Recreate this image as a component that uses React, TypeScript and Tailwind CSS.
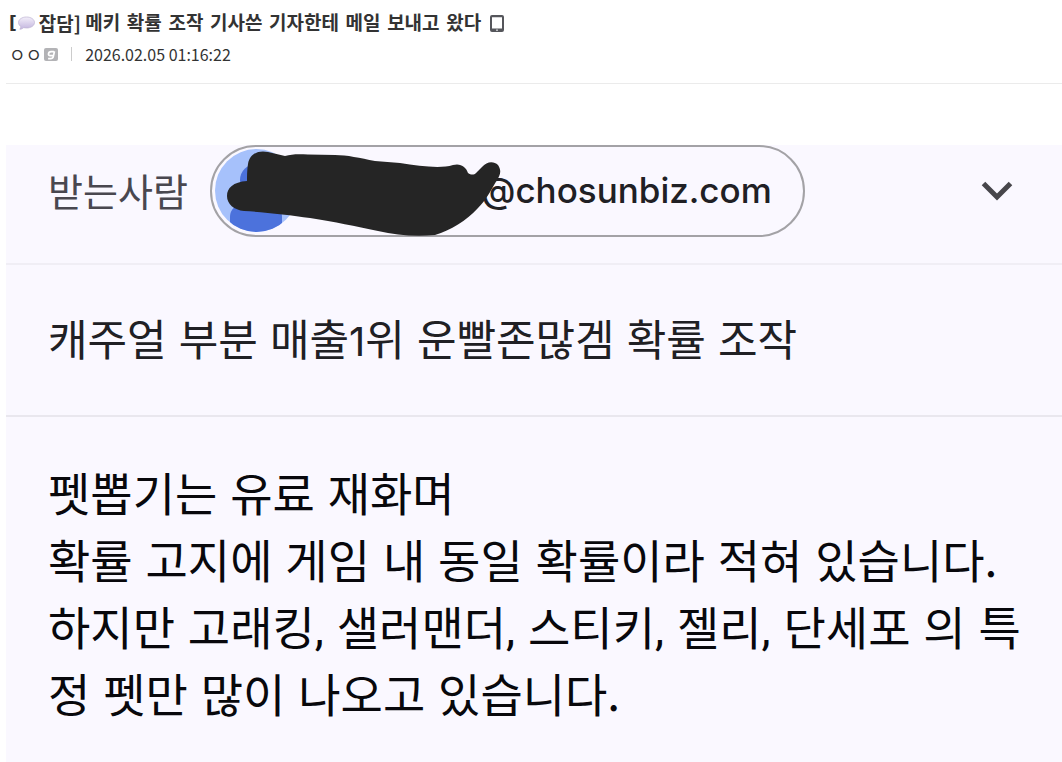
const bodyLines = [
  '펫뽑기는 유료 재화며',
  '확률 고지에 게임 내 동일 확률이라 적혀 있습니다.',
  '하지만 고래킹, 샐러맨더, 스티키, 젤리, 단세포 의 특',
  '정 펫만 많이 나오고 있습니다.',
];

function BubbleIcon() {
  return (
    <svg width="18" height="16" viewBox="0 0 18 16" aria-hidden="true">
      <defs>
        <linearGradient id="bubble" x1="0" y1="0" x2="0" y2="1">
          <stop offset="0" stopColor="#f3effa" />
          <stop offset="1" stopColor="#c3b5de" />
        </linearGradient>
      </defs>
      <path
        d="M9.500 2c4.600 0 8 2.400 8 5.500s-3.400 5.500-8 5.500c-1 0-2-.1-2.900-.3-1 .9-2.300 1.500-3.800 1.500.8-.8 1.100-1.700 1-2.600C2.300 10.500 1.500 9.100 1.500 7.500 1.500 4.400 4.900 2 9.500 2z"
        fill="url(#bubble)"
        stroke="#bdb3d2"
        strokeWidth=".7"
      />
    </svg>
  );
}

function TabletIcon() {
  return (
    <svg width="14" height="17" viewBox="0 0 14 17" aria-hidden="true">
      <path
        fillRule="evenodd"
        d="M2 0h10a2 2 0 0 1 2 2v13a2 2 0 0 1-2 2H2a2 2 0 0 1-2-2V2a2 2 0 0 1 2-2zm0 2.200v11.300h10V2.200z"
        fill="#55565b"
      />
      <circle cx="7" cy="15.200" r=".9" fill="#d5d5d8" />
    </svg>
  );
}

function GuestIcon() {
  return (
    <svg width="14" height="13" viewBox="0 0 14 13" aria-hidden="true">
      <rect width="14" height="13" rx="2" fill="#b3b3b6" />
      <path
        d="M10.500 3.200 9.300 8.600c-.3 1.400-1.200 2-2.800 2H4.100M9.900 3.600H7.100c-1.500 0-2.500 1-2.600 2.400-.1 1.100.5 1.600 1.500 1.600h3.200"
        fill="none"
        stroke="#fff"
        strokeWidth="1.700"
      />
    </svg>
  );
}

function Avatar() {
  return (
    <svg width="83" height="83" viewBox="0 0 83 83" aria-hidden="true">
      <defs>
        <clipPath id="avatar">
          <circle cx="41.500" cy="41.500" r="41.500" />
        </clipPath>
      </defs>
      <g clipPath="url(#avatar)">
        <rect width="83" height="83" fill="#a6c1fb" />
        <circle cx="41" cy="31" r="16" fill="#4c72dc" />
        <path d="M15 83V68c0-12 14-16 26-16s26 4 26 16v15z" fill="#4c72dc" />
      </g>
    </svg>
  );
}

function Scribble() {
  return (
    <svg width="300" height="92" viewBox="0 0 300 92" aria-hidden="true">
      <path
        d="M17 51C17 43 23 37 37 36C37 31 37 25 38 19C40 8 49 5 58 7L75 11C82 9 88 9 98 9.500L125 10C137 10 150 13 165 16L190 18C210 21 230 24 243 20C251 18 256 22 258 28C261 30 264 30 266 28L272 22C277 16 284 16 288 20C292 26 290 30 287 35C280 47 276 55 268 63C256 76 241 85 225 90C205 92 186 90 168 86C145 81 125 77 100 73C80 70 52 67 34 66C24 65 17 59 17 51Z"
        fill="#252525"
      />
    </svg>
  );
}

function PostHeader() {
  return (
    <header className="ml-[6px] border-b border-[#ebebeb] pt-[10px] pb-[17px] pl-[3px] text-[#333]">
      <h1 className="flex items-center text-[19px] leading-[26px] font-bold font-['DejaVu_Sans','Noto_Sans_CJK_KR',sans-serif]">
        <span className="text-[17px]">[</span>
        <BubbleIcon />
        <span className="ml-1 whitespace-pre font-['Noto_Sans_CJK_KR',sans-serif]">잡담] </span>
        <span>메키 확률 조작 기사쓴 기자한테 메일 보내고 왔다</span>
        <span className="ml-[9px]">
          <TabletIcon />
        </span>
      </h1>
      <div className="mt-[6px] flex items-center text-[16px] leading-[24px] font-['Noto_Sans_CJK_KR',sans-serif]">
        <span className="mr-[2px] text-[18px]">ㅇㅇ</span>
        <GuestIcon />
        <span className="mx-[13px] h-[14px] w-px bg-[#ccc]" />
        <time dateTime="2026-02-05T01:16:22">2026.02.05 01:16:22</time>
      </div>
    </header>
  );
}

function Recipient() {
  return (
    <div className="flex h-[120px] items-start border-b-2 border-[#f0eef5] pr-[49px] pl-[42px]">
      <span className="flex h-[92px] w-[162px] shrink-0 items-center pb-1 text-[38px] text-[#49474f]">
        받는사람
      </span>
      <div className="relative flex h-[92px] shrink-0 items-center rounded-full border-2 border-[#a3a2a6] pr-[31px] pb-[2px] pl-[3px]">
        <Avatar />
        <span className="ml-[183px] font-['Inter',sans-serif] text-[35px] font-medium text-[#202024]">
          @chosunbiz.com
        </span>
        <div className="absolute -top-[2px] -left-[2px]">
          <Scribble />
        </div>
      </div>
      <button type="button" aria-label="받는사람 펼치기" className="ml-auto flex h-[92px] items-center">
        <svg width="32" height="22" viewBox="0 0 32 22" aria-hidden="true">
          <path d="M2.500 3.500 16 17 29.500 3.500" fill="none" stroke="#47464b" strokeWidth="5" />
        </svg>
      </button>
    </div>
  );
}

// Commas come from the narrower latin face
function BodyLine({ text }: { text: string }) {
  const parts = text.split(',');

  return (
    <p className="whitespace-nowrap">
      {parts.map((part, i) => (
        <span key={part}>
          {i > 0 && <span className="font-['Roboto',sans-serif] leading-none">,</span>}
          {part}
        </span>
      ))}
    </p>
  );
}

export default function App() {
  return (
    <main className="flex min-h-screen flex-col bg-white">
      <PostHeader />
      <article
        lang="ko"
        className="mt-[61px] ml-[6px] grow bg-[#faf8ff] font-['Noto_Sans_CJK_KR',sans-serif]"
      >
        <Recipient />
        <h2 className="border-b-2 border-[#e9e7ee] pt-[40px] pb-[46px] pl-[42px] text-[43px] leading-[64px] text-[#202024]">
          캐주얼 부분 매출<span className="font-['Inter',sans-serif] text-[40px] leading-none">1</span>위 운빨존많겜 확률 조작
        </h2>
        <div className="pt-[41px] pl-[42px] text-[46px] leading-[67px] text-[#08080c]">
          {bodyLines.map((line) => (
            <BodyLine key={line} text={line} />
          ))}
        </div>
      </article>
    </main>
  );
}
